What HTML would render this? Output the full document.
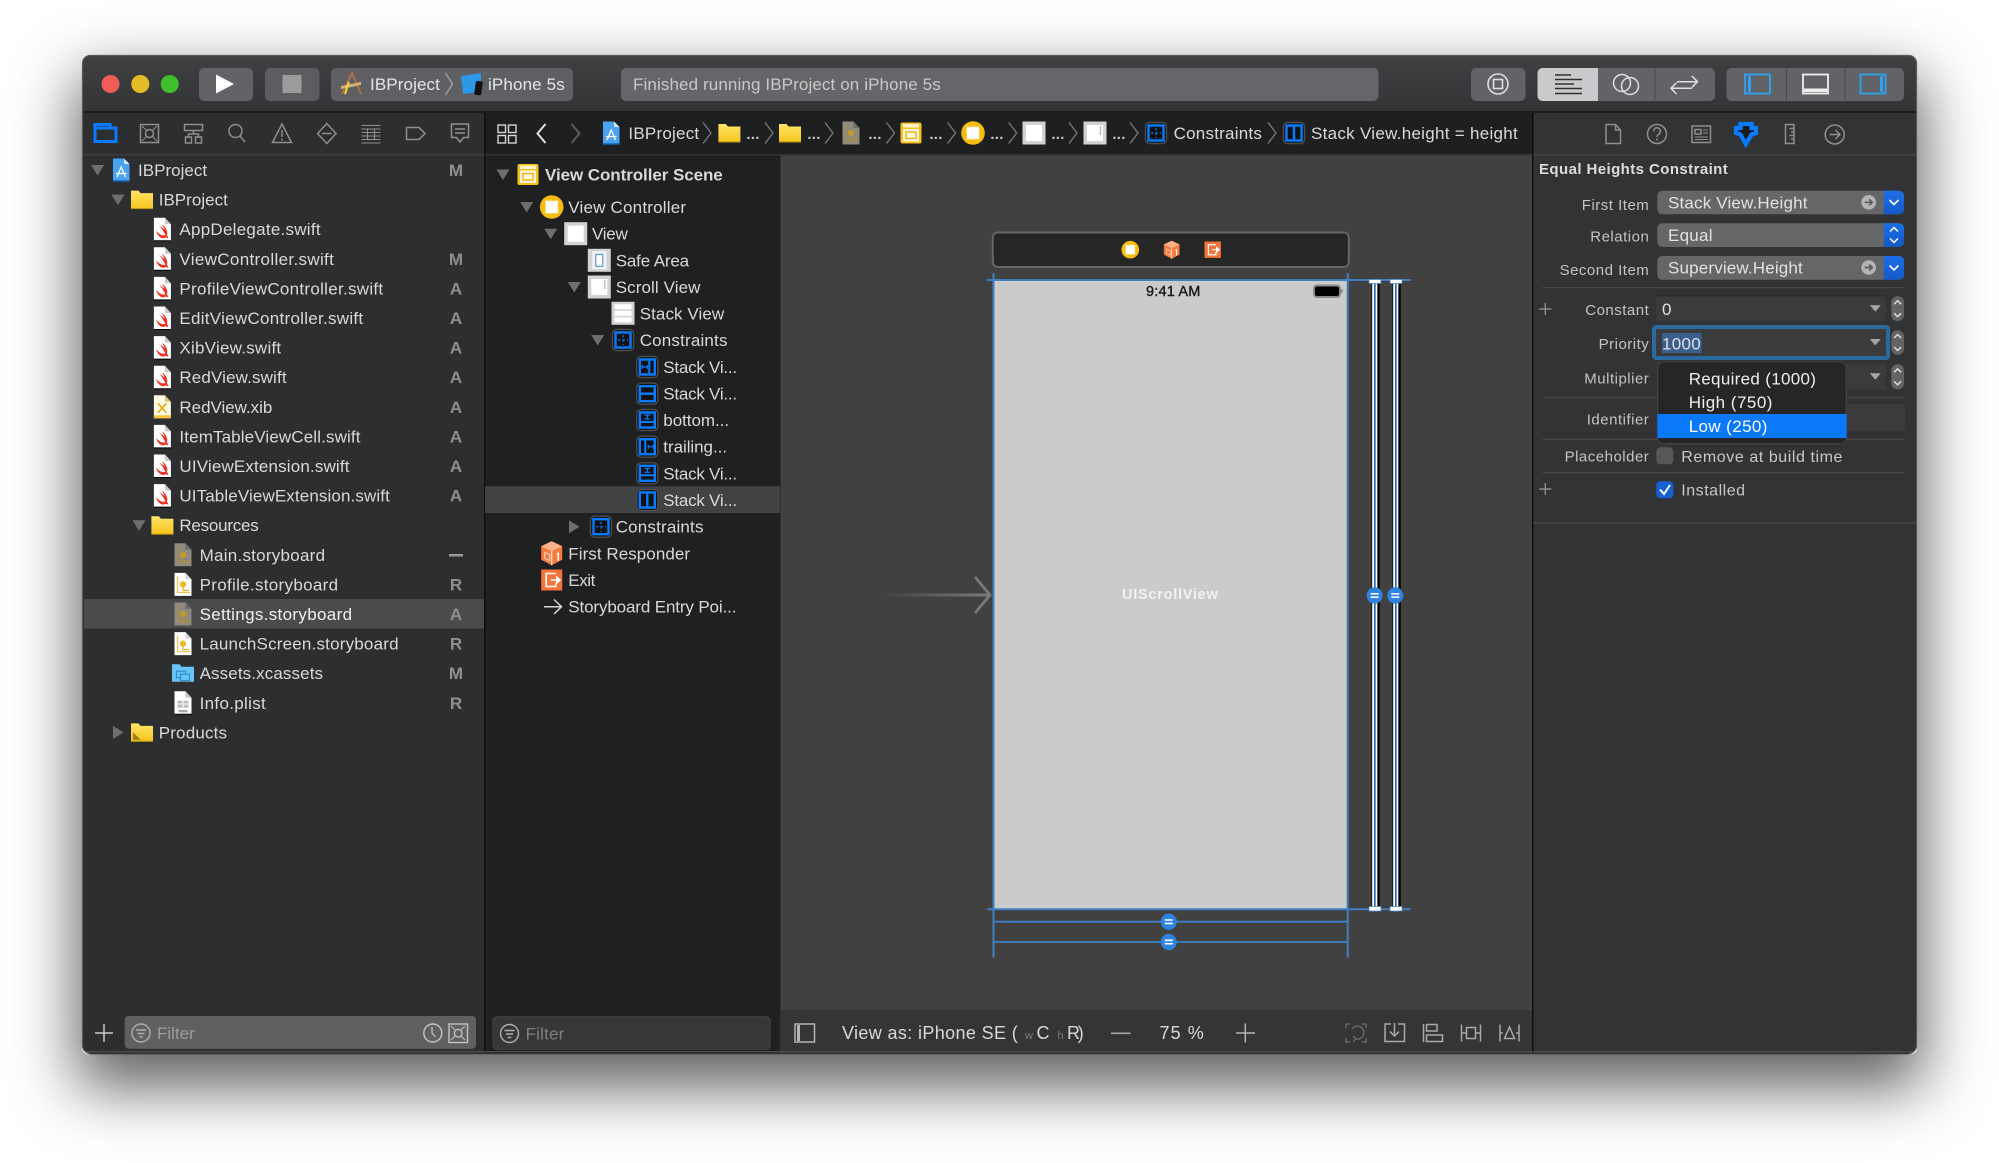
<!DOCTYPE html>
<html><head><meta charset="utf-8"><title>Xcode IBProject</title>
<style>
html,body{margin:0;padding:0;background:#fff;width:1999px;height:1163px;overflow:hidden}
#w{position:absolute;left:82px;top:55px;width:1835px;height:998.500px;border-radius:8px 8px 6px 6px;box-shadow:0 28px 62px 6px rgba(0,0,0,.62)}
svg{position:absolute;left:0;top:0;filter:blur(.3px)}
text{font-family:"Liberation Sans",sans-serif;font-size:17px;letter-spacing:.25px;fill:#d9d9d9}
.s{font-weight:bold;font-size:17px;fill:#8f8f8f;text-anchor:middle;letter-spacing:0}
.l{font-size:15px;letter-spacing:.5px;fill:#c4c4c4;text-anchor:end}
.f{fill:#e2e2e2}
.d{fill:#c8c8c8;text-anchor:middle;font-weight:bold;font-size:15px}
</style></head><body>
<div id="w"></div>
<svg width="1999" height="1163" viewBox="0 0 1999 1163" xmlns="http://www.w3.org/2000/svg">
<defs>
<clipPath id="c"><rect x="82" y="55" width="1835" height="998.500" rx="8"/></clipPath>
<linearGradient id="tb" x1="0" y1="0" x2="0" y2="1"><stop offset="0" stop-color="#3f4042"/><stop offset="1" stop-color="#333436"/></linearGradient>
<linearGradient id="fo" x1="0" y1="0" x2="0" y2="1"><stop offset="0" stop-color="#ffe468"/><stop offset="1" stop-color="#f6c51d"/></linearGradient>
<linearGradient id="ar" x1="0" y1="0" x2="1" y2="0"><stop offset="0" stop-color="#7a7a7a" stop-opacity="0"/><stop offset="1" stop-color="#7a7a7a"/></linearGradient>
<linearGradient id="bl" x1="0" y1="0" x2="0" y2="1"><stop offset="0" stop-color="#1c6fe6"/><stop offset="1" stop-color="#1558c6"/></linearGradient>

<g id="tD"><path d="M-6.500-5H6.500L0 5.500z" fill="#6e6e6e"/></g>
<g id="tR"><path d="M-5-6.500V6.500L5.500 0z" fill="#6e6e6e"/></g>
<g id="page"><path d="M-8.500-11.500H2.500L8.500-5V11.500H-8.500z" fill="#fff"/><path d="M2.500-11.500V-5H8.500z" fill="#c9c9c9"/><path d="M-8.500 11.500H8.500" stroke="#000" stroke-width="1"/></g>
<g id="sw"><use href="#page"/><path d="M-6.500 1.500C-2.500 6 1 6.800 3 5.800 0-.200-2.500-3-4-4.500-1.500-2.300 1-.5 2.500.2 1.300-1.500.2-3.500-.3-5 3.500-2 6 2.500 4.500 6.200 5.600 7.200 6.100 8.500 5.700 9.500 4.800 8.200 3.500 8 2.500 8.500 0 10-4.500 8-6.500 1.500z" fill="#ee3324"/></g>
<g id="xib"><path d="M-8.500-11.500H2.500L8.500-5V11.500H-8.500z" fill="#fffbe6"/><path d="M2.500-11.500V-5H8.500z" fill="#d9c77a"/><path d="M-8.500 8.500H8.500V11.500H-8.500z" fill="#f3c53a"/><path d="M-4.500-3.500 4 6M4-3.500-4.500 6" stroke="#eda81c" stroke-width="1.600"/></g>
<g id="sb"><path d="M-8.500-11.500H2.500L8.500-5V11.500H-8.500z" fill="#fff"/><path d="M2.500-11.500V-5H8.500z" fill="#d8d8d8"/><path d="M-5.500-8V8H7" fill="none" stroke="#f1c453" stroke-width="1.300"/><circle cx="0" cy="0" r="3.200" fill="#eebb30"/><path d="M0 3V6H6" fill="none" stroke="#e5ae2a" stroke-width="1.200"/></g>
<g id="sbg"><path d="M-8.500-11.500H2.500L8.500-5V11.500H-8.500z" fill="#8e8a80"/><path d="M2.500-11.500V-5H8.500z" fill="#6f6c64"/><path d="M-5.500-8V8H7" fill="none" stroke="#a88f4b" stroke-width="1.300"/><circle cx="0" cy="0" r="3.200" fill="#c09a2a"/><path d="M0 3V6H6" fill="none" stroke="#b08f30" stroke-width="1.200"/></g>
<g id="pl"><use href="#page"/><path d="M-5.500-2H5.500V5H-5.500z" fill="#bdbdbd"/><path d="M-5.500 1.200H5.500M0-2V5" stroke="#fff" stroke-width="1"/><rect x="-4.500" y="7" width="9" height="2.500" fill="#aaa"/></g>
<g id="fld"><path d="M-11-9H-3.500L-1.500-6.500H11V9H-11z" fill="url(#fo)"/><path d="M-11 9H11" stroke="#b88f10" stroke-width="1"/></g>
<g id="fldp"><use href="#fld"/><path d="M-9 7.500V0L-1 7.500z" fill="#a37f1c"/></g>
<g id="fldb"><path d="M-11-9H-3.500L-1.500-6.500H11V9H-11z" fill="#69c4f6"/><rect x="-6.500" y="-2" width="9" height="6.500" fill="none" stroke="#2f8dc9" stroke-width="1.200"/><rect x="-2.500" y="1" width="9" height="6.500" fill="#69c4f6" stroke="#2f8dc9" stroke-width="1.200"/><path d="M-11 9H11" stroke="#4a2a20" stroke-width="1"/></g>
<g id="prj"><path d="M-8-11.500H3L8.500-6V11.500H-8z" fill="#4aa3f0"/><path d="M3-11.500V-6H8.500z" fill="#cfe8fc"/><path d="M-4 7 .2-3 4.500 7M-5 3.500H5.500" fill="none" stroke="#fff" stroke-width="1.300"/><path d="M-8 11H8.500" stroke="#1761b8" stroke-width="1.400"/></g>
<g id="scene"><rect x="-10.500" y="-10.500" width="21" height="21" rx="2" fill="#f8c020"/><rect x="-8" y="-9" width="16" height="3.500" fill="#fff4c8"/><rect x="-8" y="-4" width="16" height="12.500" fill="#fff7d8"/><rect x="-5" y="-1" width="10" height="6.500" fill="none" stroke="#e9ae14" stroke-width="1.300"/></g>
<g id="vc"><circle r="11.800" fill="#f6bd10"/><rect x="-6" y="-6" width="12" height="12" fill="#fff" stroke="#fff3c8" stroke-dasharray="1.500 1" stroke-width="1.200"/></g>
<g id="vw"><rect x="-11.500" y="-11.500" width="23" height="23" fill="#d2d2d2"/><rect x="-8" y="-8" width="16" height="16" fill="#fff"/></g>
<g id="safe"><rect x="-11.500" y="-11.500" width="23" height="23" fill="#d2d2d2"/><rect x="-7" y="-9" width="14" height="18" fill="#f4f4f4"/><rect x="-3.500" y="-6" width="7" height="12" fill="#fff" stroke="#3f86cc" stroke-width="1"/></g>
<g id="scr"><rect x="-11.500" y="-11.500" width="23" height="23" fill="#d2d2d2"/><rect x="-8" y="-8" width="16" height="16" fill="#fff"/><path d="M5.500-7V2" stroke="#bbb" stroke-width="1.400"/></g>
<g id="stk"><rect x="-11.500" y="-11.500" width="23" height="23" fill="#d2d2d2"/><rect x="-8.500" y="-9" width="17" height="5" fill="#fff"/><rect x="-8.500" y="-2.500" width="17" height="5" fill="#fff"/><rect x="-8.500" y="4" width="17" height="5" fill="#fff"/></g>
<g id="cb"><rect x="-10.500" y="-10.500" width="21" height="21" rx="4" fill="#101113" stroke="#4b4c4e" stroke-width="1.400"/><rect x="-7.500" y="-7.500" width="15" height="15" fill="none" stroke="#0a7bff" stroke-width="2.400"/></g>
<g id="c1"><use href="#cb"/><path d="M0-5V5" stroke="#0a7bff" stroke-width="1.200" stroke-dasharray="2.500 2"/><path d="M-5 0H5" stroke="#0a7bff" stroke-width="1.200" stroke-dasharray="2.500 2"/></g>
<g id="c2"><use href="#cb"/><path d="M2-7V7" stroke="#0a7bff" stroke-width="2"/><path d="M-5 0H0M-5-2V2M0-2V2" stroke="#0a7bff" stroke-width="1.200"/></g>
<g id="c3"><use href="#cb"/><path d="M-7 0H7" stroke="#0a7bff" stroke-width="2.400"/></g>
<g id="c4"><use href="#cb"/><path d="M-7 2H7" stroke="#0a7bff" stroke-width="2"/><path d="M-3-5H3M-3-1H3M0-5V-1" stroke="#0a7bff" stroke-width="1.200"/></g>
<g id="c5"><use href="#cb"/><path d="M-2-7V7" stroke="#0a7bff" stroke-width="2"/><path d="M1 0H6M1-2V2M6-2V2" stroke="#0a7bff" stroke-width="1.200"/></g>
<g id="c6"><use href="#cb"/><path d="M-7 2H7" stroke="#0a7bff" stroke-width="2"/><path d="M-3-5H3M-3-1H3M0-5V-1" stroke="#0a7bff" stroke-width="1.200"/></g>
<g id="c7"><use href="#cb"/><path d="M0-7V7" stroke="#0a7bff" stroke-width="2.400"/></g>
<g id="cube"><path d="M0-12 10.500-7V6.500L0 12-10.500 6.500V-7z" fill="#f47a3d"/><path d="M-10.500-7 0-2 10.500-7 0-12z" fill="#fbb28a"/><path d="M0-2V12" stroke="#fff" stroke-opacity=".8" stroke-width="1.200"/><path d="M-7-1 -2 1.500V7.500L-7 5z" fill="none" stroke="#ffd4bd" stroke-width="1"/><path d="M5 1 6.500 0V7.500" fill="none" stroke="#fff" stroke-width="1.400"/></g>
<g id="exit"><rect x="-10.500" y="-10.500" width="21" height="21" fill="#f4733a"/><path d="M4-6.500H-5.500V6.500H4V3" fill="#f4733a" stroke="#fff" stroke-width="1.600"/><path d="M-1 0H5M5-3 8.500 0 5 3z" fill="#fff" stroke="#fff" stroke-width="1.400"/></g>
<g id="ch"><path d="M-4-10.500 4 0-4 10.500" fill="none" stroke="#7a7a7a" stroke-width="1.300"/></g>
<g id="fi"><circle r="9" fill="none" stroke="#aeaeae" stroke-width="1.400"/><path d="M-5-3H5M-3.500 .5H3.500M-1.800 4H1.800" stroke="#aeaeae" stroke-width="1.400"/></g>
<g id="ste"><path d="M-3.500-4.500 0-8 3.500-4.500M-3.500 4.500 0 8 3.500 4.500" fill="none" stroke="#dcdcdc" stroke-width="1.500"/></g>
<g id="dm"><path d="M-5.500-3.500H5.500L0 3z" fill="#a4a4a4"/></g>
<g id="pa"><circle r="7.300" fill="#b4b4b4"/><path d="M-4 0H3M0.500-3 3.500 0 .5 3" fill="none" stroke="#5b5b5b" stroke-width="1.700"/></g>
<g id="eq"><ellipse rx="8" ry="8.200" fill="#2f83e0"/><path d="M-4-1.700H4M-4 1.700H4" stroke="#fff" stroke-width="1.600"/></g>
<g id="beam"><rect x="-4" y="0" width="9" height="632" fill="#000" opacity=".55"/><rect x="-2.800" y="0" width="5.200" height="632" fill="#fff"/><rect x="-1" y="0" width="1.700" height="632" fill="#2f6fb5"/><rect x="2.400" y="0" width="2" height="632" fill="#000"/><rect x="-6" y="0" width="12" height="4" fill="#fff" stroke="#3f7fc2" stroke-width=".7"/><rect x="-6" y="627" width="12" height="4.500" fill="#fff" stroke="#3f7fc2" stroke-width=".7"/></g>
</defs>

<g clip-path="url(#c)">
<!-- panels -->
<rect x="82" y="55" width="1835" height="58" fill="url(#tb)"/>
<rect x="82" y="111" width="1835" height="2.500" fill="#1c1d1f"/>
<rect x="82" y="113" width="402" height="941" fill="#2d2e30"/>
<rect x="485" y="113" width="296" height="941" fill="#1f2022"/>
<rect x="781" y="154" width="752" height="856" fill="#414141"/>
<rect x="781" y="1010" width="752" height="44" fill="#353535"/>
<rect x="1533" y="113" width="384" height="941" fill="#323335"/>
<rect x="485" y="113" width="1048" height="41" fill="#1e1f21"/>
<rect x="82" y="154" width="402" height="1.500" fill="#3a3b3d"/>
<rect x="485" y="154" width="1048" height="1.500" fill="#333436"/>
<rect x="1533" y="154" width="384" height="1.500" fill="#424345"/>
<rect x="484" y="113" width="1.500" height="941" fill="#0e0e0f"/>
<rect x="1532" y="113" width="1.500" height="941" fill="#0e0e0f"/>
<rect x="780" y="155" width="1" height="898" fill="#333"/>
<rect x="82" y="1051" width="1835" height="1.200" fill="#4d4d4e"/>

<!-- toolbar -->
<circle cx="110.500" cy="84" r="9" fill="#ee5d57"/><circle cx="140.300" cy="84" r="9" fill="#e5bc27"/><circle cx="169.700" cy="84" r="9" fill="#3fbf2c"/>
<rect x="199" y="68" width="54" height="33" rx="5" fill="#626366"/><path d="M216 74.500 234 84 216 93.500z" fill="#fff"/>
<rect x="265" y="68" width="54.500" height="33" rx="5" fill="#5c5d60"/><rect x="282.500" y="75" width="19" height="18" fill="#9b9b9b"/>
<rect x="331" y="68" width="242" height="33" rx="5" fill="#5f6063"/>
<g transform="translate(351,84)"><path d="M-9 10 1-11 10 10" fill="none" stroke="#c9703a" stroke-width="1.500"/><path d="M-10 2 10-2V1L-10 5z" fill="#d8b070"/><path d="M-6 10-2-2" stroke="#f4d63c" stroke-width="2"/></g>
<text x="370" y="90" style="letter-spacing:.15px;fill:#e6e6e6" textLength="70">IBProject</text>
<path d="M445.500 73 452.500 84 445.500 95" fill="none" stroke="#a8a8a8" stroke-width="1.300"/>
<g transform="translate(471,84)"><path d="M-10-8 10-11 10 8-8 10z" fill="#2c98e8"/><rect x="4" y="-3" width="7" height="14" rx="1.500" fill="#111" transform="rotate(8 7 4)"/></g>
<text x="488" y="90" style="fill:#e6e6e6" textLength="77">iPhone 5s</text>
<rect x="621" y="68" width="757.500" height="33" rx="5" fill="#656669"/>
<text x="633" y="90" textLength="308" style="fill:#c8c8c8">Finished running IBProject on iPhone 5s</text>

<rect x="1471" y="68" width="54.500" height="33" rx="5" fill="#626366"/>
<circle cx="1498" cy="84" r="10" fill="none" stroke="#dedede" stroke-width="1.600"/><rect x="1493.500" y="79.500" width="9" height="9" fill="none" stroke="#dedede" stroke-width="1.600"/>

<rect x="1537.500" y="68" width="177.500" height="33" rx="5" fill="#626366"/>
<path d="M1598 68H1542.500a5 5 0 0 0-5 5V96a5 5 0 0 0 5 5H1598z" fill="#c9cacb"/>
<rect x="1654.500" y="68" width="1" height="33" fill="#4a4b4d"/>
<path d="M1555 75H1571M1555 79.500H1582M1555 84H1574M1555 88.500H1582M1555 93.500H1582" stroke="#2f3033" stroke-width="1.500"/>
<circle cx="1622" cy="83" r="8.500" fill="none" stroke="#e0e0e0" stroke-width="1.500"/><circle cx="1630" cy="86" r="8.500" fill="none" stroke="#e0e0e0" stroke-width="1.500"/>
<path d="M1677 81.700H1697M1692 76 1697.500 81.700 1692 87.400M1692 88.300H1671M1676.500 82.600 1671 88.300 1676.500 94" fill="none" stroke="#e0e0e0" stroke-width="1.500"/>

<rect x="1726.500" y="68" width="177.500" height="33" rx="5" fill="#626366"/>
<rect x="1786" y="68" width="1" height="33" fill="#4a4b4d"/><rect x="1844.500" y="68" width="1" height="33" fill="#4a4b4d"/>
<rect x="1745" y="74.500" width="25" height="19" fill="none" stroke="#2ea3f2" stroke-width="1.800"/><rect x="1748" y="76" width="3" height="16" fill="#2ea3f2"/>
<rect x="1803" y="74.500" width="25" height="19" fill="none" stroke="#f0f0f0" stroke-width="1.800"/><rect x="1804" y="88.500" width="23" height="3.500" fill="#f0f0f0"/>
<rect x="1860.500" y="74.500" width="25" height="19" fill="none" stroke="#2ea3f2" stroke-width="1.800"/><rect x="1880" y="76" width="3" height="16" fill="#2ea3f2"/>

<!-- navigator tabs -->
<g fill="none" stroke="#8f8f8f" stroke-width="1.500">
<path d="M95 124.500H110V128H116V141.500H95zM95 128H110" stroke="#0a7bff" stroke-width="3"/>
<rect x="140.500" y="124.500" width="18" height="18"/><circle cx="149.500" cy="133.500" r="4"/><path d="M142 126 146.500 130.500M157 126 152.500 130.500M142 141 146.500 136.500M157 141 152.500 136.500" stroke-width="1.100"/>
<rect x="184.500" y="124.500" width="18" height="6"/><rect x="185.500" y="137" width="6" height="6"/><rect x="195.500" y="137" width="6" height="6"/><path d="M193.500 130.500V134M188.500 137V134H198.500V137"/>
<circle cx="235.500" cy="131" r="6.500"/><path d="M240 136 245 142"/>
<path d="M282 124 291.500 142.500H272.500zM282 130V137M282 138.500V140.500"/>
<path d="M326.800 123.500 336 133.500 326.800 143.500 317.600 133.500zM322 133.500H331.500"/>
<path d="M361.500 125.500H380.500M361.500 129H380.500M361.500 132.500H380.500M361.500 136H380.500M361.500 139.500H380.500M361.500 143H380.500M367.500 129V140M374.500 129V140" stroke-width="1.100"/>
<path d="M406.500 127.500H419L425 133.500 419 139.500H406.500z"/>
<path d="M451.500 124H468.500V137.500H463.500L460 142 456.500 137.500H451.500zM455 129H465M455 133H465"/>
</g>

<!-- navigator rows -->
<rect x="84" y="599" width="400" height="29.400" fill="#4a4b4d"/>
<use href="#tD" x="97.600" y="170"/><use href="#prj" x="121" y="170"/><text x="138" y="176" textLength="69.400">IBProject</text><text class="s" x="456" y="176">M</text>
<use href="#tD" x="118" y="199.600"/><use href="#fld" x="142" y="199.600"/><text x="158.700" y="205.600" textLength="69.400">IBProject</text>
<use href="#sw" x="162.400" y="229.200"/><text x="179.400" y="235.200" textLength="141.400">AppDelegate.swift</text>
<use href="#sw" x="162.400" y="258.800"/><text x="179.400" y="264.800" textLength="154.700">ViewController.swift</text><text class="s" x="456" y="264.800">M</text>
<use href="#sw" x="162.400" y="288.400"/><text x="179.400" y="294.400" textLength="204">ProfileViewController.swift</text><text class="s" x="456" y="294.400">A</text>
<use href="#sw" x="162.400" y="318"/><text x="179.400" y="324" textLength="184">EditViewController.swift</text><text class="s" x="456" y="324">A</text>
<use href="#sw" x="162.400" y="347.600"/><text x="179.400" y="353.600" textLength="102">XibView.swift</text><text class="s" x="456" y="353.600">A</text>
<use href="#sw" x="162.400" y="377.200"/><text x="179.400" y="383.200" textLength="107.400">RedView.swift</text><text class="s" x="456" y="383.200">A</text>
<use href="#xib" x="162.400" y="406.800"/><text x="179.400" y="412.800" textLength="93.200">RedView.xib</text><text class="s" x="456" y="412.800">A</text>
<use href="#sw" x="162.400" y="436.400"/><text x="179.400" y="442.400" textLength="181.300">ItemTableViewCell.swift</text><text class="s" x="456" y="442.400">A</text>
<use href="#sw" x="162.400" y="466"/><text x="179.400" y="472" textLength="170.300">UIViewExtension.swift</text><text class="s" x="456" y="472">A</text>
<use href="#sw" x="162.400" y="495.600"/><text x="179.400" y="501.600" textLength="210.700">UITableViewExtension.swift</text><text class="s" x="456" y="501.600">A</text>
<use href="#tD" x="139" y="525.200"/><use href="#fld" x="162.400" y="525.200"/><text x="179.400" y="531.200" textLength="79.600">Resources</text>
<use href="#sbg" x="183" y="554.800"/><text x="199.600" y="560.800" textLength="125.700">Main.storyboard</text><rect x="449" y="554" width="14" height="2.500" fill="#9a9a9a"/>
<use href="#sb" x="183" y="584.400"/><text x="199.600" y="590.400" textLength="138.700">Profile.storyboard</text><text class="s" x="456" y="590.400">R</text>
<use href="#sbg" x="183" y="614"/><text x="199.600" y="620" style="fill:#f0f0f0" textLength="152.700">Settings.storyboard</text><text class="s" x="456" y="620">A</text>
<use href="#sb" x="183" y="643.600"/><text x="199.600" y="649.600" textLength="199.200">LaunchScreen.storyboard</text><text class="s" x="456" y="649.600">R</text>
<use href="#fldb" x="183" y="673.200"/><text x="199.600" y="679.200" textLength="123.700">Assets.xcassets</text><text class="s" x="456" y="679.200">M</text>
<use href="#pl" x="183" y="702.800"/><text x="199.600" y="708.800" textLength="66.400">Info.plist</text><text class="s" x="456" y="708.800">R</text>
<use href="#tR" x="118" y="732.400"/><use href="#fldp" x="142" y="732.400"/><text x="158.700" y="738.400" textLength="68.600">Products</text>

<!-- navigator filter -->
<path d="M104 1024V1042M95 1033H113" stroke="#c8c8c8" stroke-width="1.500"/>
<rect x="124.700" y="1016" width="351.300" height="32.700" rx="4" fill="#5f6062"/>
<use href="#fi" x="141" y="1033"/><text x="157" y="1039" style="fill:#9d9d9d" textLength="38">Filter</text>
<circle cx="432.800" cy="1033" r="9" fill="none" stroke="#c4c4c4" stroke-width="1.400"/><path d="M432 1027V1033L435.500 1037" fill="none" stroke="#c4c4c4" stroke-width="1.300"/>
<rect x="449" y="1024" width="18.500" height="18.500" fill="none" stroke="#c4c4c4" stroke-width="1.400"/><circle cx="458.200" cy="1033.200" r="3.800" fill="none" stroke="#c4c4c4" stroke-width="1.300"/><path d="M451 1026 455 1030M465 1026 461 1030M451 1040 455 1036M465 1040 461 1036" stroke="#c4c4c4" stroke-width="1"/>
<rect x="493" y="1016.700" width="277" height="32.600" rx="4" fill="#363738" stroke="#454648" stroke-width="1"/>
<use href="#fi" x="509.500" y="1033.500"/><text x="525.600" y="1039.500" style="fill:#808080" textLength="39">Filter</text>

<!-- jump bar -->
<g fill="none" stroke="#d4d4d4" stroke-width="1.400"><rect x="498" y="125" width="7.500" height="7.500"/><rect x="508.500" y="125" width="7.500" height="7.500"/><rect x="498" y="135.500" width="7.500" height="7.500"/><rect x="508.500" y="135.500" width="7.500" height="7.500"/></g>
<path d="M545.500 124 537.500 133.500 545.500 143" fill="none" stroke="#e0e0e0" stroke-width="2"/>
<path d="M571.500 124 579.500 133.500 571.500 143" fill="none" stroke="#5c5c5c" stroke-width="2"/>
<use href="#prj" x="611" y="133"/><text x="628.400" y="139" textLength="71">IBProject</text><use href="#ch" x="707" y="133"/>
<use href="#fld" x="729.400" y="133"/><text class="d" x="753" y="139">...</text><use href="#ch" x="769" y="133"/>
<use href="#fld" x="790" y="133"/><text class="d" x="814" y="139">...</text><use href="#ch" x="829" y="133"/>
<use href="#sbg" x="851" y="133"/><text class="d" x="875" y="139">...</text><use href="#ch" x="890.500" y="133"/>
<use href="#scene" x="911" y="133"/><text class="d" x="936" y="139">...</text><use href="#ch" x="951.600" y="133"/>
<use href="#vc" x="973" y="133"/><text class="d" x="997" y="139">...</text><use href="#ch" x="1012.700" y="133"/>
<use href="#vw" x="1034" y="133"/><text class="d" x="1058" y="139">...</text><use href="#ch" x="1073" y="133"/>
<use href="#scr" x="1095" y="133"/><text class="d" x="1119" y="139">...</text><use href="#ch" x="1134" y="133"/>
<use href="#c1" x="1156" y="133"/><text x="1173.600" y="139" textLength="88.500">Constraints</text><use href="#ch" x="1272" y="133"/>
<use href="#c7" x="1294" y="133"/><text x="1311" y="139" textLength="207">Stack View.height = height</text>

<!-- outline -->
<rect x="485" y="486.300" width="295" height="26.700" fill="#414244"/>
<use href="#tD" x="503" y="174.500"/><use href="#scene" x="528" y="174.500"/><text x="545" y="180.500" style="font-weight:bold" textLength="178">View Controller Scene</text>
<use href="#tD" x="526.700" y="207"/><use href="#vc" x="551.700" y="207"/><text x="568.300" y="213" textLength="118">View Controller</text>
<use href="#tD" x="550.700" y="233.700"/><use href="#vw" x="575.700" y="233.700"/><text x="592" y="239.700" textLength="36">View</text>
<use href="#safe" x="599.300" y="260.300"/><text x="615.700" y="266.300" textLength="73.700">Safe Area</text>
<use href="#tD" x="574.300" y="287"/><use href="#scr" x="599.300" y="287"/><text x="615.700" y="293" textLength="85">Scroll View</text>
<use href="#stk" x="623" y="313.300"/><text x="639.700" y="319.300" textLength="84.700">Stack View</text>
<use href="#tD" x="597.700" y="340"/><use href="#c1" x="623" y="340"/><text x="639.700" y="346" textLength="88">Constraints</text>
<use href="#c2" x="647.300" y="367"/><text x="663.300" y="373" textLength="74">Stack Vi...</text>
<use href="#c3" x="647.300" y="393.700"/><text x="663.300" y="399.700" textLength="74">Stack Vi...</text>
<use href="#c4" x="647.300" y="420"/><text x="663.300" y="426" textLength="66">bottom...</text>
<use href="#c5" x="647.300" y="446.700"/><text x="663.300" y="452.700" textLength="64">trailing...</text>
<use href="#c6" x="647.300" y="473.300"/><text x="663.300" y="479.300" textLength="74">Stack Vi...</text>
<use href="#c7" x="647.300" y="500"/><text x="663.300" y="506" textLength="74">Stack Vi...</text>
<use href="#tR" x="574" y="526.700"/><use href="#c1" x="601" y="526.700"/><text x="615.700" y="532.700" textLength="88">Constraints</text>
<use href="#cube" x="551.700" y="553.300"/><text x="568.300" y="559.300" textLength="122">First Responder</text>
<use href="#exit" x="551.700" y="580"/><text x="568.300" y="586" textLength="27.300">Exit</text>
<path d="M544 606.700H561M554 599.500 561.500 606.700 554 614" fill="none" stroke="#d8d8d8" stroke-width="1.500"/><text x="568.300" y="612.700" textLength="168.400">Storyboard Entry Poi...</text>

<!-- canvas -->
<rect x="992.800" y="232.500" width="356" height="34.500" rx="5" fill="#262626" stroke="#666" stroke-width="2"/>
<g transform="translate(1130.300,249.700) scale(.75)"><use href="#vc"/></g>
<g transform="translate(1171.700,249.700) scale(.75)"><use href="#cube"/></g>
<g transform="translate(1212.700,249.700) scale(.78)"><use href="#exit"/></g>
<rect x="994" y="280" width="353.500" height="629" fill="#cbcbcb"/>
<g stroke="#3f7fc2" stroke-width="2" fill="none">
<path d="M987.300 280H1410.700M987.300 909.300H1410.700"/>
<path d="M993.500 273.300V957.700M1347.700 273.300V957.700"/>
<path d="M993.500 921.700H1347.700M993.500 942H1347.700" stroke-width="1.800"/>
</g>
<text x="1173.300" y="296" style="font-size:14.500px;fill:#1c1c1c;text-anchor:middle;letter-spacing:.2px;stroke:#1c1c1c;stroke-width:.4">9:41 AM</text>
<rect x="1314" y="285.500" width="26" height="11.500" rx="3" fill="#000" stroke="#8a8a8a" stroke-width="2"/><rect x="1341" y="289" width="1.500" height="4" fill="#8a8a8a"/>
<text x="1122" y="599" style="font-size:14.500px;font-weight:bold;fill:#f2f2f2" textLength="96">UIScrollView</text>
<rect x="880" y="593.500" width="108" height="3" fill="url(#ar)"/><path d="M975 577 990 595 975 613" fill="none" stroke="#7a7a7a" stroke-width="2.800"/>
<use href="#beam" x="1375" y="279.500"/><use href="#beam" x="1396" y="279.500"/>
<use href="#eq" x="1374.600" y="595.500"/><use href="#eq" x="1395.300" y="595.500"/>
<use href="#eq" x="1168.800" y="921.700"/><use href="#eq" x="1168.800" y="942"/>

<!-- canvas bar -->
<rect x="795" y="1024" width="19.500" height="18" fill="none" stroke="#b5b5b5" stroke-width="1.500"/><rect x="797" y="1025" width="3" height="16" fill="#b5b5b5"/>
<text x="842" y="1039" style="font-size:18px" textLength="176">View as: iPhone SE (</text>
<text x="1025" y="1039" style="font-size:11px;fill:#7d7d7d">w</text><text x="1036.500" y="1039" style="font-size:18px">C</text>
<text x="1057.500" y="1039" style="font-size:11px;fill:#7d7d7d">h</text><text x="1067" y="1039" style="font-size:18px" textLength="17">R)</text>
<rect x="1111" y="1032.500" width="19.500" height="1.600" fill="#a8a8a8"/>
<text x="1159.500" y="1039" style="font-size:18px" textLength="44.500">75 %</text>
<path d="M1245.300 1023.500V1042.500M1236 1033H1255" stroke="#b5b5b5" stroke-width="1.500"/>
<g fill="none" stroke="#6a6a6a" stroke-width="1.400"><path d="M1346 1028V1024H1350M1362 1024H1366V1028M1366 1038V1042H1362M1350 1042H1346V1038"/><path d="M1352 1029A6.500 6.500 0 1 1 1356 1039M1356 1039 1353 1036M1356 1039 1353 1042"/></g>
<g fill="none" stroke="#aaa" stroke-width="1.500">
<path d="M1391 1024H1385V1041.500H1404.500V1024H1398M1394.500 1023V1035M1390 1031.500 1394.500 1036 1399 1031.500"/>
<path d="M1423.500 1024V1042M1426.500 1024.500H1437V1031H1426.500zM1426.500 1035H1442.500V1041.500H1426.500z"/>
<path d="M1461.500 1024.500V1041.500M1480.500 1024.500V1041.500M1461.500 1033H1466.500M1475.500 1033H1480.500M1466.500 1027.500H1475.500V1038.500H1466.500z"/>
<path d="M1500 1024.500V1041.500M1519 1024.500V1041.500M1500 1033H1503M1516 1033H1519M1509.500 1027 1514.500 1038.500H1504.500z"/>
</g>

<!-- inspector tabs -->
<g fill="none" stroke="#8f8f8f" stroke-width="1.500">
<path d="M1606 124.500H1615.500L1620.500 130V143.500H1606zM1615.500 124.500V130H1620.500"/>
<circle cx="1657" cy="134" r="9.500"/><path d="M1653.500 131.500C1653.500 126.500 1660.500 126.500 1660.500 131.500 1660.500 134 1657 134.500 1657 137"/><path d="M1657 138.500V140.500"/>
<rect x="1692" y="126" width="18.500" height="16.500"/><path d="M1695 129.500H1701V134H1695z"/><path d="M1703 130H1708M1703 133H1708M1695 137H1708M1695 139.500H1708" stroke-width="1"/>
<path d="M1785.500 124.500H1794V143.500H1785.500zM1789.500 128.500H1794M1791 132H1794M1789.500 135.500H1794M1791 139H1794" />
<circle cx="1834.700" cy="134.500" r="9.500"/><path d="M1829.500 134.500H1839.500M1835.500 130 1840 134.500 1835.500 139"/>
</g>
<path d="M1740.500 124H1751.500V128H1756V133L1751.500 134.500 1745.800 144 1740.500 134.500 1736 133V128H1740.500z" fill="#19191b" stroke="#0a7bff" stroke-width="4.200"/>

<!-- inspector -->
<text x="1539" y="174" style="font-weight:bold;font-size:15px;fill:#dcdcdc" textLength="189">Equal Heights Constraint</text>
<text class="l" x="1649.300" y="210">First Item</text>
<text class="l" x="1649.300" y="241.500">Relation</text>
<text class="l" x="1649.300" y="275">Second Item</text>
<text class="l" x="1649.300" y="315">Constant</text>
<text class="l" x="1649.300" y="349">Priority</text>
<text class="l" x="1649.300" y="383.500">Multiplier</text>
<text class="l" x="1649.300" y="424.500">Identifier</text>
<text class="l" x="1649.300" y="461.500">Placeholder</text>

<rect x="1657.300" y="190.700" width="246.700" height="23.600" rx="5" fill="#656668"/><path d="M1883.700 190.700H1899a5 5 0 0 1 5 5V209.300a5 5 0 0 1-5 5H1883.700z" fill="url(#bl)"/>
<text class="f" x="1668" y="208.500" textLength="139.700">Stack View.Height</text><use href="#pa" x="1868.700" y="202.300"/><path d="M1889.500 200 1894 204.500 1898.500 200" fill="none" stroke="#fff" stroke-width="1.600"/>
<rect x="1657.300" y="223.300" width="246.700" height="23.700" rx="5" fill="#656668"/><path d="M1883.700 223.300H1899a5 5 0 0 1 5 5V242a5 5 0 0 1-5 5H1883.700z" fill="url(#bl)"/>
<text class="f" x="1668" y="241">Equal</text><path d="M1890 231.500 1894 227.500 1898 231.500M1890 238.500 1894 242.500 1898 238.500" fill="none" stroke="#fff" stroke-width="1.500"/>
<rect x="1657.300" y="256" width="246.700" height="23.700" rx="5" fill="#656668"/><path d="M1883.700 256H1899a5 5 0 0 1 5 5V274.700a5 5 0 0 1-5 5H1883.700z" fill="url(#bl)"/>
<text class="f" x="1668" y="273.500" textLength="135">Superview.Height</text><use href="#pa" x="1868.700" y="267.500"/><path d="M1889.500 265.500 1894 270 1898.500 265.500" fill="none" stroke="#fff" stroke-width="1.600"/>
<rect x="1542.700" y="287" width="361.300" height="1.200" fill="#48494b"/>

<rect x="1656.300" y="295.300" width="229.400" height="26" fill="#3a3b3d"/><rect x="1656.300" y="295.300" width="229.400" height="1" fill="#262729"/>
<text class="f" x="1662" y="315">0</text><use href="#dm" x="1875.300" y="308.700"/>
<rect x="1891.300" y="296.300" width="12.700" height="24.700" rx="6" fill="#636466"/><use href="#ste" x="1897.600" y="308.700"/>
<path d="M1545.300 303V315M1539.300 309H1551.300" stroke="#8a8a8a" stroke-width="1.400"/>

<rect x="1654" y="327" width="234" height="31" rx="2" fill="#3a3b3d" stroke="#2a6a9e" stroke-width="4"/>
<rect x="1662" y="333" width="39.700" height="20" fill="#3a5f8f"/><text class="f" x="1662" y="349.500" textLength="39">1000</text><use href="#dm" x="1875.300" y="342.500"/>
<rect x="1891.300" y="330.300" width="12.700" height="24.400" rx="6" fill="#636466"/><use href="#ste" x="1897.600" y="342.500"/>

<rect x="1840" y="364.500" width="45.700" height="25" fill="#3a3b3d"/><use href="#dm" x="1875.300" y="376.700"/>
<rect x="1891.300" y="364.300" width="12.700" height="25" rx="6" fill="#636466"/><use href="#ste" x="1897.600" y="376.800"/>
<rect x="1542.700" y="397" width="361.300" height="1.200" fill="#48494b"/>
<rect x="1840" y="404.300" width="65" height="26.700" fill="#3a3b3d"/>
<rect x="1542.700" y="438.700" width="361.300" height="1.200" fill="#48494b"/>

<rect x="1656.300" y="447.300" width="17" height="17" rx="4" fill="#575759"/>
<text x="1681.300" y="461.800" style="fill:#c8c8c8;font-size:16px" textLength="161.400">Remove at build time</text>
<rect x="1542.700" y="472" width="361.300" height="1.200" fill="#48494b"/>
<rect x="1656.300" y="481.300" width="17" height="17" rx="4" fill="#1660d4"/><path d="M1660 489.500 1664 494 1670 485" fill="none" stroke="#fff" stroke-width="2"/>
<text x="1681.300" y="495.300" style="fill:#c8c8c8;font-size:16px" textLength="64">Installed</text>
<path d="M1545.300 483V495M1539.300 489H1551.300" stroke="#8a8a8a" stroke-width="1.400"/>
<rect x="1533" y="522.300" width="384" height="1.200" fill="#48494b"/>

<!-- popup -->
<rect x="1657.800" y="361.800" width="188.400" height="82" rx="6" fill="#262626" stroke="#464646" stroke-width="1"/>
<rect x="1657.300" y="414" width="189.400" height="24" fill="#0a78f8"/>
<text x="1688.700" y="384.500" style="fill:#eee" textLength="127.500">Required (1000)</text>
<text x="1688.700" y="408" style="fill:#eee" textLength="84">High (750)</text>
<text x="1688.700" y="432" style="fill:#fff" textLength="79">Low (250)</text>
</g>
<rect x="82.500" y="55.500" width="1834" height="998" rx="8" fill="none" stroke="#59595a" stroke-width="1.200"/>
<path d="M90 1053.800H1909" stroke="#232323" stroke-width=".9"/>
</svg>
</body></html>
